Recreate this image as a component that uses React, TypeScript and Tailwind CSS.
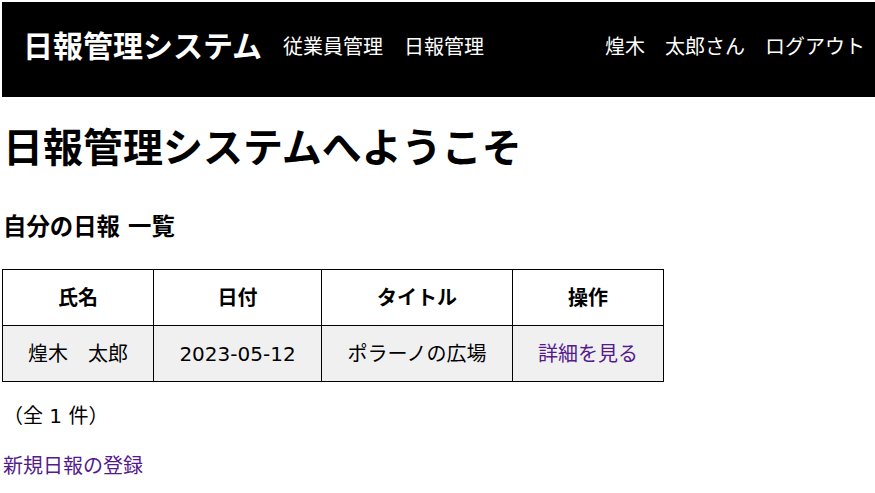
import React from 'react';

// 日報データの型
interface Report {
  id: number;
  name: string;
  date: string;
  title: string;
}

const reports: Report[] = [
  { id: 1, name: '煌木　太郎', date: '2023-05-12', title: 'ポラーノの広場' },
];

const font = { fontFamily: '"DejaVu Sans", "Noto Sans CJK JP", sans-serif' };

const App: React.FC = () => {
  return (
    <div className="min-h-[493px] bg-white pl-[2px] pt-[2px] text-[20px] text-black" style={font}>
      {/* ヘッダー */}
      <header className="flex h-[95px] items-center bg-black pb-[5px] pl-[21px] pr-[10px] text-white">
        <span className="text-[30px] font-bold leading-none">日報管理システム</span>
        <nav className="ml-[21px] flex gap-[21px] leading-none">
          <a>従業員管理</a>
          <a>日報管理</a>
        </nav>
        <div className="ml-auto flex gap-[20px] leading-none">
          <span>煌木　太郎さん</span>
          <a>ログアウト</a>
        </div>
      </header>

      <main className="pl-[1px]">
        <h1 className="mt-[27px] text-[40px] font-bold leading-[48px]">日報管理システムへようこそ</h1>
        <h3 className="mt-[40px] text-[23.4px] font-bold leading-[30px]">自分の日報 一覧</h3>

        {/* 日報一覧テーブル */}
        <table className="mt-[27px] -ml-[1px] border-collapse border border-black">
          <thead>
            <tr className="h-[56px]">
              <th className="w-[151px] border border-black font-bold">氏名</th>
              <th className="w-[168px] border border-black font-bold">日付</th>
              <th className="w-[191px] border border-black font-bold">タイトル</th>
              <th className="w-[151px] border border-black font-bold">操作</th>
            </tr>
          </thead>
          <tbody>
            {reports.map((r) => (
              <tr key={r.id} className="h-[56px] bg-[#f0f0f0]">
                <td className="border border-black text-center">{r.name}</td>
                <td className="border border-black text-center">{r.date}</td>
                <td className="border border-black text-center">{r.title}</td>
                <td className="border border-black text-center">
                  <a className="text-[#551a8b]">詳細を見る</a>
                </td>
              </tr>
            ))}
          </tbody>
        </table>

        <p className="mt-[22px] leading-[24px]">（全 {reports.length} 件）</p>
        <p className="mt-[26px] leading-[24px]">
          <a className="text-[#551a8b]">新規日報の登録</a>
        </p>
      </main>
    </div>
  );
};

export default App;
